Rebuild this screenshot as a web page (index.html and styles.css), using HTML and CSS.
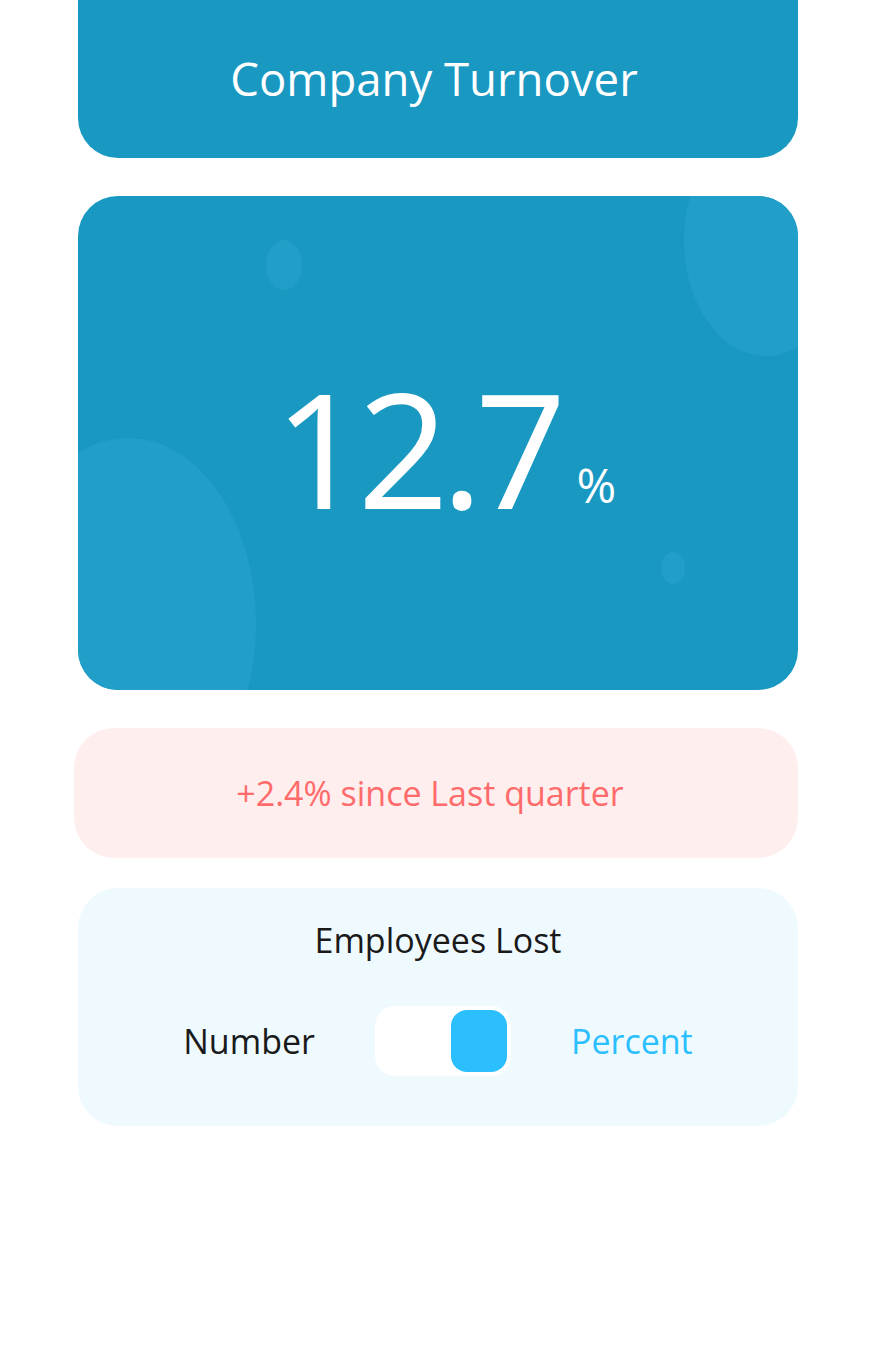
FILE: index.html
```html
<!DOCTYPE html>
<html lang="en">
<head>
<meta charset="utf-8">
<title>Company Turnover</title>
<link rel="stylesheet" href="styles.css">
</head>
<body>
<main class="page">
  <header class="card title-card">
    <h1 class="title">Company Turnover</h1>
  </header>

  <section class="card value-card">
    <span class="blob blob-tr" aria-hidden="true"></span>
    <span class="blob blob-tl" aria-hidden="true"></span>
    <span class="blob blob-bl" aria-hidden="true"></span>
    <span class="blob blob-br" aria-hidden="true"></span>
    <div class="value">
      <span class="value-num">12.7</span>
      <span class="value-unit">%</span>
    </div>
  </section>

  <section class="card change-card">
    <p class="change-text">+2.4% since Last quarter</p>
  </section>

  <section class="card lost-card">
    <h2 class="lost-title">Employees Lost</h2>
    <div class="toggle-row">
      <span class="toggle-label">Number</span>
      <div class="toggle" role="switch" aria-checked="true">
        <span class="toggle-knob"></span>
      </div>
      <span class="toggle-label active">Percent</span>
    </div>
  </section>
</main>
</body>
</html>
```

FILE: styles.css
```css
* {
  box-sizing: border-box;
}

html, body {
  margin: 0;
  padding: 0;
  background: #ffffff;
}

body {
  font-family: "Open Sans", "Noto Sans", "DejaVu Sans", sans-serif;
  color: #1a1a1a;
}

.page {
  width: 720px;
  margin-left: 78px;
  display: flex;
  flex-direction: column;
  padding-bottom: 240px;
}

.card {
  border-radius: 40px;
}

.title-card {
  height: 158px;
  background: #1998c2;
  border-radius: 0 0 40px 40px;
  display: flex;
  align-items: center;
  justify-content: center;
  padding-right: 8px;
}

.title {
  margin: 0;
  font-weight: 400;
  font-size: 45.5px;
  color: #ffffff;
  line-height: 1;
}

.value-card {
  margin-top: 38px;
  height: 494px;
  background: #1998c2;
  position: relative;
  overflow: hidden;
  display: flex;
  align-items: center;
  justify-content: center;
}

.blob {
  position: absolute;
  background: #229fc8;
  border-radius: 50%;
}

.blob-tr {
  left: 606px;
  top: -72px;
  width: 164px;
  height: 232px;
}

.blob-tl {
  left: 188px;
  top: 44px;
  width: 36px;
  height: 50px;
}

.blob-bl {
  left: -78px;
  top: 242px;
  width: 256px;
  height: 372px;
}

.blob-br {
  left: 583px;
  top: 356px;
  width: 24px;
  height: 32px;
}

.value {
  position: relative;
  display: flex;
  align-items: baseline;
  gap: 18px;
  color: #ffffff;
  margin-left: 14px;
  margin-top: 8px;
}

.value-num {
  font-size: 160px;
  line-height: 1;
  font-weight: 400;
  letter-spacing: -8px;
}

.value-unit {
  font-size: 48px;
  line-height: 1;
  position: relative;
  top: -6px;
}

.change-card {
  margin-top: 38px;
  margin-left: -4px;
  height: 130px;
  background: #ffeeee;
  display: flex;
  align-items: center;
  justify-content: center;
  padding-right: 12px;
}

.change-text {
  margin: 0;
  font-size: 34px;
  color: #ff6b6b;
  line-height: 1;
}

.lost-card {
  margin-top: 30px;
  height: 238px;
  background: #effaff;
  display: flex;
  flex-direction: column;
  align-items: center;
  padding-top: 30px;
}

.lost-title {
  margin: 0;
  font-weight: 400;
  font-size: 34px;
  line-height: 44px;
  color: #1a1a1a;
}

.toggle-row {
  margin-top: 44px;
  display: flex;
  align-items: center;
  gap: 60px;
}

.toggle-label {
  font-size: 34px;
  line-height: 1;
  color: #1a1a1a;
}

.toggle-label.active {
  color: #2bbfff;
}

.toggle {
  width: 136px;
  height: 70px;
  background: #ffffff;
  border-radius: 20px;
  display: flex;
  justify-content: flex-end;
  align-items: center;
  padding-right: 4px;
}

.toggle-knob {
  width: 56px;
  height: 62px;
  border-radius: 16px;
  background: #2cbfff;
}
```
